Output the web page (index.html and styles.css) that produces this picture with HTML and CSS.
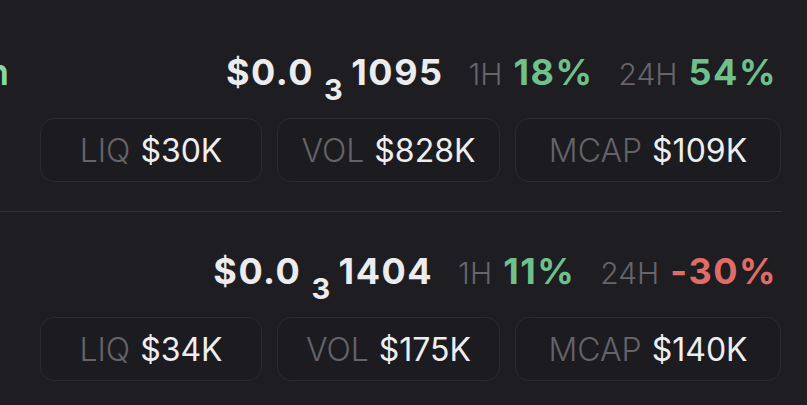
FILE: index.html
```html
<!DOCTYPE html>
<html lang="en">
<head>
<meta charset="utf-8">
<title>Tokens</title>
<link rel="stylesheet" href="styles.css">
</head>
<body>
<div class="list">
  <div class="row">
    <div class="head">
      <span class="name">Pepe Bitcoin</span>
      <span class="price">$0.0<sub class="zeros">3</sub>1095</span>
      <span class="chg"><span class="lbl">1H</span><span class="up">18%</span></span>
      <span class="chg"><span class="lbl">24H</span><span class="up">54%</span></span>
    </div>
    <div class="stats">
      <div class="chip"><span class="lbl">LIQ</span><span class="val">$30K</span></div>
      <div class="chip"><span class="lbl">VOL</span><span class="val">$828K</span></div>
      <div class="chip"><span class="lbl">MCAP</span><span class="val">$109K</span></div>
    </div>
  </div>
  <div class="row">
    <div class="head">
      <span class="price">$0.0<sub class="zeros">3</sub>1404</span>
      <span class="chg"><span class="lbl">1H</span><span class="up">11%</span></span>
      <span class="chg"><span class="lbl">24H</span><span class="down">-30%</span></span>
    </div>
    <div class="stats">
      <div class="chip"><span class="lbl">LIQ</span><span class="val">$34K</span></div>
      <div class="chip"><span class="lbl">VOL</span><span class="val">$175K</span></div>
      <div class="chip"><span class="lbl">MCAP</span><span class="val">$140K</span></div>
    </div>
  </div>
</div>
</body>
</html>
```

FILE: styles.css
```css
html, body {
  margin: 0;
  padding: 0;
  background: #1e1d22;
}

body {
  font-family: Inter, "Noto Sans", sans-serif;
  color: #ececef;
  overflow: hidden;
}

.list {
  padding-top: 13px;
}

.row {
  padding: 39px 0 29px;
  border-bottom: 1px solid #323137;
  margin-right: 25px;
}

.head {
  display: flex;
  justify-content: flex-end;
  align-items: baseline;
  gap: 25px;
  height: 40px;
  line-height: 40px;
  font-size: 36px;
  padding-right: 5px;
}

.name {
  margin-right: auto;
  width: 9px;
  overflow: hidden;
  white-space: nowrap;
  direction: rtl;
  color: #86d9a0;
  font-weight: 600;
  font-size: 36px;
}

.price {
  font-weight: 700;
  letter-spacing: 1.5px;
}

.zeros {
  font-size: 29px;
  line-height: 0;
  vertical-align: -15px;
  margin: 0 7px 0 10px;
}

.chg {
  display: flex;
  align-items: baseline;
  gap: 11px;
}

.chg .lbl {
  color: #66656b;
  font-weight: 300;
  font-size: 30px;
}

.up {
  color: #6fc08a;
  font-weight: 700;
  letter-spacing: 1.5px;
}

.down {
  color: #e06c68;
  font-weight: 700;
  letter-spacing: 1.5px;
}

.stats {
  display: grid;
  grid-template-columns: 222px 223px 266px;
  column-gap: 15px;
  padding-left: 40px;
  margin-top: 26px;
}

.chip {
  height: 62px;
  border: 1px solid #2c2b31;
  border-radius: 14px;
  background: #1c1b20;
  display: flex;
  align-items: center;
  justify-content: center;
  gap: 10px;
  font-size: 32px;
}

.chip .lbl {
  color: #646369;
  font-weight: 300;
}

.chip .val {
  color: #eeeef1;
  font-weight: 400;
}
```
